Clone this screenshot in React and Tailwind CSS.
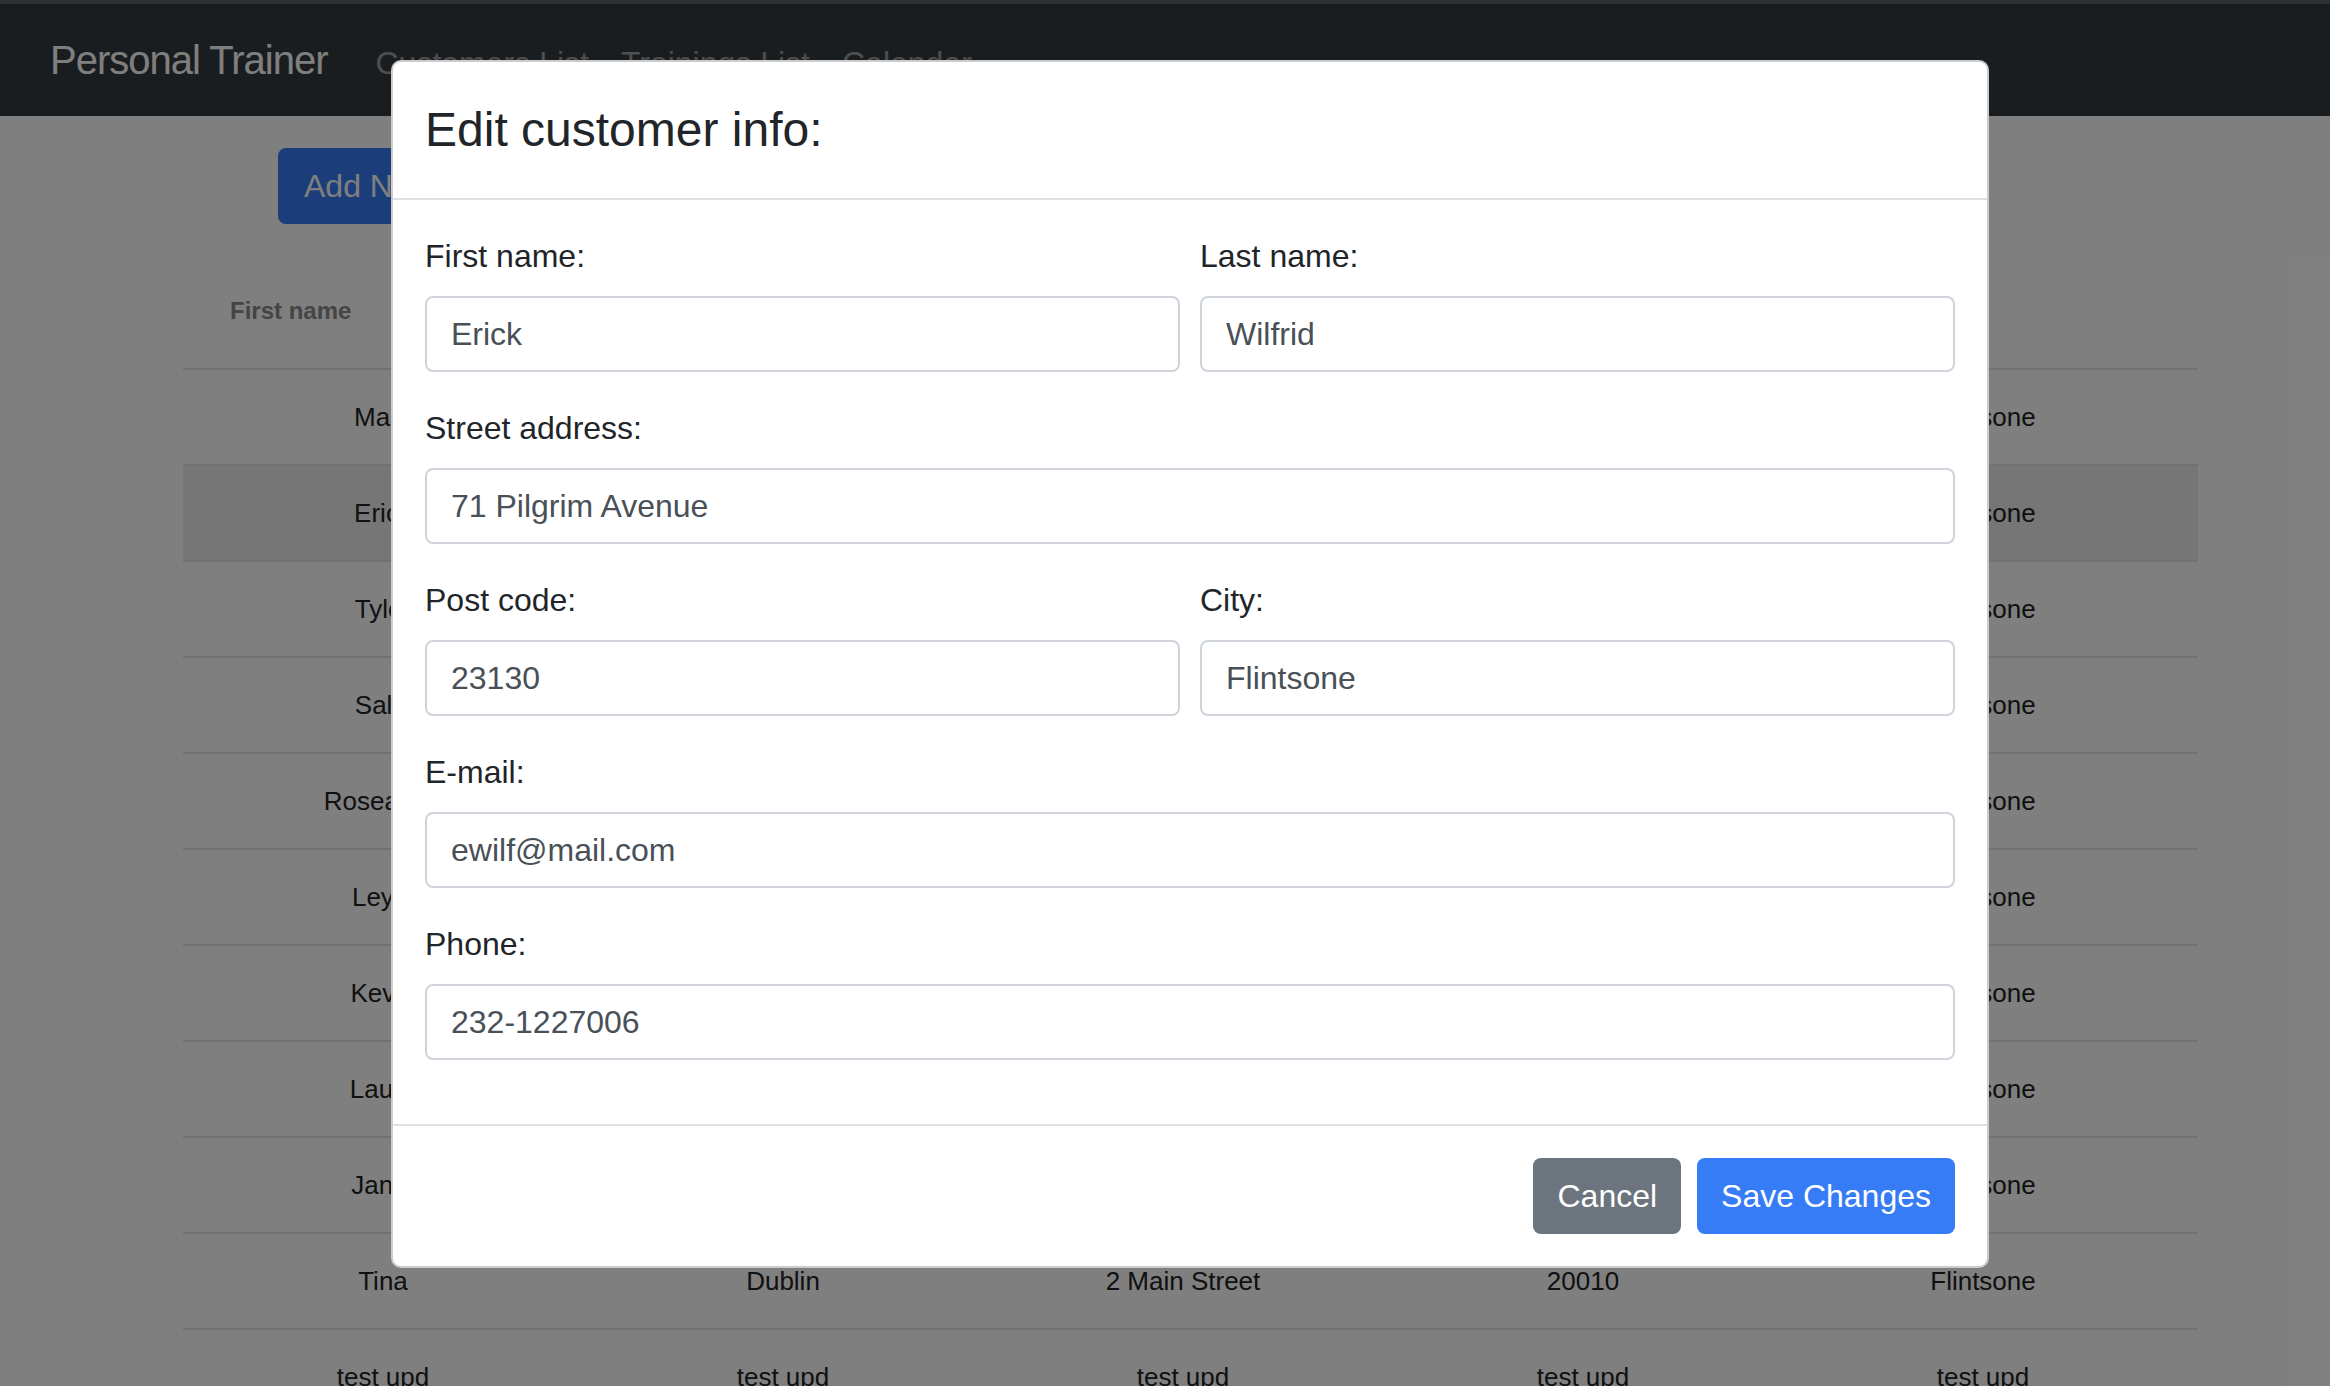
import React from 'react';

// --- page data under the dialog ---
const CUSTOMERS = [
  ['Mark', 'Holloway', '14 Oak Street', '20011', 'Flintsone'],
  ['Erick', 'Wilfrid', '71 Pilgrim Avenue', '23130', 'Flintsone'],
  ['Tyler', 'Benson', '9 Elm Road', '20012', 'Flintsone'],
  ['Sally', 'Moore', '33 Birch Lane', '20013', 'Flintsone'],
  ['Roseanna', 'Clark', '5 Cedar Court', '20014', 'Flintsone'],
  ['Leyla', 'Hart', '18 Maple Drive', '20015', 'Flintsone'],
  ['Kevin', 'Stone', '42 Pine Street', '20016', 'Flintsone'],
  ['Laura', 'Reed', '7 Willow Way', '20017', 'Flintsone'],
  ['Janet', 'Fox', '26 Ash Avenue', '20018', 'Flintsone'],
  ['Tina', 'Dublin', '2 Main Street', '20010', 'Flintsone'],
  ['test upd', 'test upd', 'test upd', 'test upd', 'test upd'],
];

const HEADERS = ['First name', 'Last name', 'Street address', 'Post code', 'City'];

function Field({ label, value }) {
  return (
    <div className="mb-[32px]">
      <label className="block text-[32px] leading-[48px] mb-[16px] text-[#212529]">{label}</label>
      <input
        defaultValue={value}
        className="block w-full h-[76px] px-[24px] bg-white border-2 border-[#ced4da] rounded-[8px] text-[32px] text-[#495057] outline-none"
      />
    </div>
  );
}

export default function App() {
  return (
    <div className="relative w-[2330px] h-[1386px] overflow-hidden bg-white font-['Liberation_Sans',Arial,sans-serif]">
      {/* NAVBAR */}
      <div className="h-[4px] bg-[#5d6167]" />
      <nav className="h-[112px] bg-[#343a40] flex items-center pl-[50px]">
        <span className="text-[40px] leading-[60px] text-white mr-[32px] tracking-[-1px]">Personal Trainer</span>
        <a className="px-[16px] text-[32px] leading-[48px] text-white/50 mt-[6px]">Customers List</a>
        <a className="px-[16px] text-[32px] leading-[48px] text-white/50 mt-[6px]">Trainings List</a>
        <a className="px-[16px] text-[32px] leading-[48px] text-white/50 mt-[6px]">Calendar</a>
      </nav>

      {/* CUSTOMER TABLE */}
      <div className="pl-[278px] pt-[32px]">
        <button className="h-[76px] px-[24px] border-2 border-[#367cf6] bg-[#367cf6] text-white text-[32px] leading-[48px] rounded-[8px]">
          Add New Customer
        </button>
      </div>
      <div className="ml-[183px] w-[2015px] mt-[30px]">
        <div className="grid grid-cols-[repeat(5,400px)] h-[116px] border-b-2 border-[#dee2e6] items-center">
          {HEADERS.map((h) => (
            <div key={h} className="pl-[47px] text-[24px] font-bold text-[#8a8a8a]">{h}</div>
          ))}
        </div>
        {CUSTOMERS.map((row, i) => (
          <div
            key={i}
            className={`grid grid-cols-[repeat(5,400px)] h-[96px] border-b-2 border-[#dee2e6] items-center ${i === 1 ? 'bg-[#ececec]' : ''}`}
          >
            {row.map((cell, j) => (
              <div key={j} className="text-center text-[26px] text-[#222]">{cell}</div>
            ))}
          </div>
        ))}
      </div>

      {/* BACKDROP */}
      <div className="absolute inset-0 bg-black/50" />

      {/* EDIT DIALOG */}
      <div className="absolute left-[391px] top-[60px] w-[1598px] bg-white border-2 border-black/20 rounded-[10px] overflow-hidden">
        <div className="p-[32px] border-b-2 border-[#dee2e6]">
          <h4 className="text-[48px] leading-[72px] text-[#212529]">Edit customer info:</h4>
        </div>
        <div className="px-[32px] pt-[32px] pb-[32px]">
          <div className="grid grid-cols-2 gap-x-[20px]">
            <Field label="First name:" value="Erick" />
            <Field label="Last name:" value="Wilfrid" />
          </div>
          <Field label="Street address:" value="71 Pilgrim Avenue" />
          <div className="grid grid-cols-2 gap-x-[20px]">
            <Field label="Post code:" value="23130" />
            <Field label="City:" value="Flintsone" />
          </div>
          <Field label="E-mail:" value="ewilf@mail.com" />
          <Field label="Phone:" value="232-1227006" />
        </div>
        <div className="border-t-2 border-[#dee2e6] p-[32px] flex justify-end gap-[16px]">
          <button className="h-[76px] px-[24px] bg-[#6c757d] text-white text-[32px] leading-[48px] rounded-[8px]">
            Cancel
          </button>
          <button className="h-[76px] px-[24px] bg-[#367cf6] text-white text-[32px] leading-[48px] rounded-[8px]">
            Save Changes
          </button>
        </div>
      </div>
    </div>
  );
}
